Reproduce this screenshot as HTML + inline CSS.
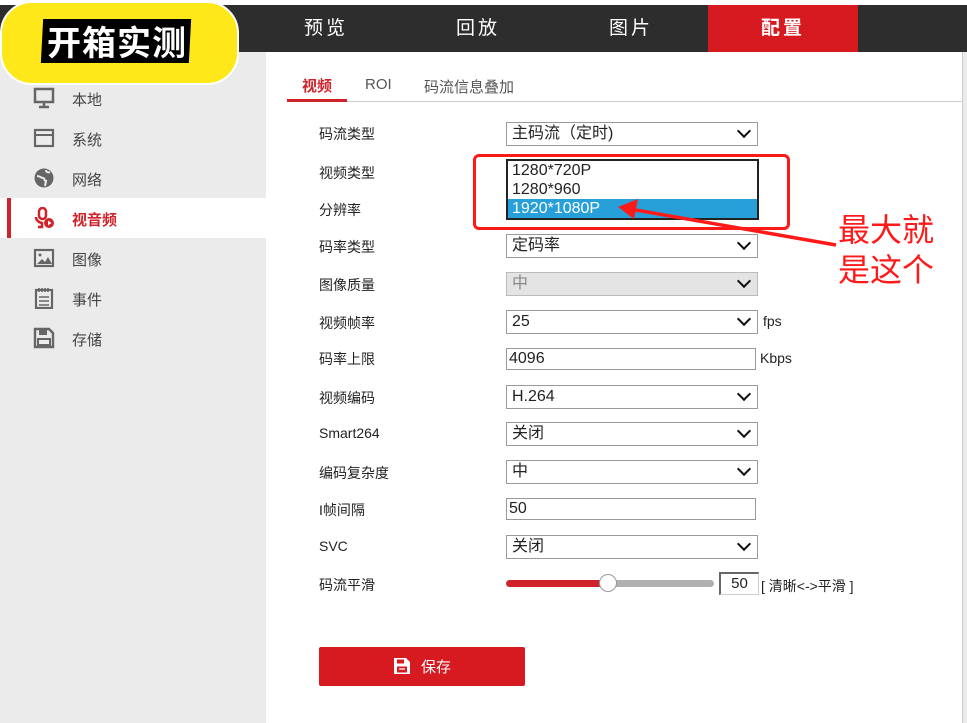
<!DOCTYPE html>
<html><head><meta charset="utf-8">
<style>
*{margin:0;padding:0;box-sizing:border-box}
body{width:967px;height:723px;position:relative;overflow:hidden;background:#fff;font-family:"Liberation Sans","Noto Sans CJK SC",sans-serif;color:#222}
.a{position:absolute}
.top{left:0;top:5px;width:967px;height:47px;background:#2d2d2d}
.nav{top:5px;height:47px;line-height:47px;color:#fff;font-size:19px;text-align:center;width:150px;letter-spacing:3px}
.side{left:0;top:52px;width:266px;height:671px;background:#ebebeb}
.si{left:72px;font-size:15px;color:#444}
.ic{left:33px;width:22px;height:22px}
.lbl{left:319px;font-size:14px;color:#222}
.sel{left:506px;width:252px;height:24px;border:1px solid #999;background:#fff;font-size:16px;line-height:22px;padding-left:5px}
.sel:after{content:"";position:absolute;right:8px;top:3px;width:8px;height:8px;border-right:2.5px solid #111;border-bottom:2.5px solid #111;transform:rotate(45deg)}
.inp{left:506px;width:250px;height:22px;border:1px solid #999;background:#fff;font-size:16px;line-height:20px;padding-left:2px}
</style></head><body>
<div class="a top"></div>
<div class="a nav" style="left:251px">预览</div>
<div class="a nav" style="left:403px">回放</div>
<div class="a nav" style="left:556px">图片</div>
<div class="a nav" style="left:708px;background:#d71920;font-weight:bold">配置</div>
<div class="a side"></div>
<div class="a" style="left:962px;top:52px;width:5px;height:671px;background:#ebebeb;border-left:1px solid #ccc"></div>

<div class="a" style="left:0;top:1px;width:239px;height:84px;background:#ffe81a;border:2px solid #fff;border-radius:32px"></div>
<div class="a" style="left:42px;top:19px;width:148px;height:44px;background:#000;transform:skew(-3deg)"></div>
<div class="a" style="left:47px;top:20px;font-size:34px;font-weight:bold;color:#fff;letter-spacing:1px;font-family:'Noto Sans CJK SC',sans-serif;line-height:42px">开箱实测</div>

<div class="a" style="left:0;top:198px;width:266px;height:40px;background:#fff"></div>
<div class="a" style="left:7px;top:198px;width:4px;height:40px;background:#d0222b"></div>
<svg class="a ic" style="top:87px" viewBox="0 0 22 22"><rect x="2" y="2" width="18" height="13" fill="none" stroke="#666" stroke-width="2.5"/><path d="M11 15v4M6 20h10" stroke="#666" stroke-width="2.5"/></svg>
<svg class="a ic" style="top:127px" viewBox="0 0 22 22"><rect x="2" y="3" width="18" height="16" fill="none" stroke="#666" stroke-width="2.2"/><path d="M2 8h18" stroke="#666" stroke-width="2"/></svg>
<svg class="a ic" style="top:167px" viewBox="0 0 22 22"><circle cx="11" cy="11" r="9.5" fill="#666"/><path d="M4 9c3 0 4 2 6 2s1 3 3 3l-1 5M13 3c0 2 2 3 4 2" stroke="#ebebeb" stroke-width="2" fill="none"/></svg>
<svg class="a ic" style="top:207px" viewBox="0 0 22 22"><rect x="6" y="1" width="7" height="11" rx="3.5" fill="none" stroke="#d0222b" stroke-width="2.5"/><path d="M3 10c0 5 6 6 6 6v4h-4" stroke="#d0222b" stroke-width="2.5" fill="none"/><circle cx="16" cy="16" r="5" fill="#d0222b"/><path d="M15 13.5v5l3.5-2.5z" fill="#fff"/></svg>
<svg class="a ic" style="top:247px" viewBox="0 0 22 22"><rect x="2" y="3" width="18" height="16" fill="none" stroke="#666" stroke-width="2.2"/><circle cx="7" cy="8" r="1.5" fill="#666"/><path d="M4 17l5-5 3 3 3-5 4 7z" fill="#666"/></svg>
<svg class="a ic" style="top:287px" viewBox="0 0 22 22"><rect x="3" y="3" width="16" height="18" fill="none" stroke="#666" stroke-width="2.2"/><path d="M6 1v4M9 1v4M12 1v4M15 1v4M6 10h10M6 14h10M6 18h10" stroke="#666" stroke-width="1.6"/></svg>
<svg class="a ic" style="top:327px" viewBox="0 0 22 22"><path d="M2 2h14l4 4v14H2z" fill="none" stroke="#666" stroke-width="2.4"/><rect x="6" y="3" width="8" height="5" fill="#666"/><rect x="5" y="12" width="12" height="6" fill="none" stroke="#666" stroke-width="2"/></svg>
<div class="a si" style="top:89px">本地</div>
<div class="a si" style="top:129px">系统</div>
<div class="a si" style="top:169px">网络</div>
<div class="a si" style="top:209px;color:#d0222b;font-weight:bold">视音频</div>
<div class="a si" style="top:249px">图像</div>
<div class="a si" style="top:289px">事件</div>
<div class="a si" style="top:329px">存储</div>

<div class="a" style="left:302px;top:75px;font-size:15px;color:#d0222b;font-weight:bold">视频</div>
<div class="a" style="left:365px;top:76px;font-size:15px;color:#555">ROI</div>
<div class="a" style="left:424px;top:76px;font-size:15px;color:#555">码流信息叠加</div>
<div class="a" style="left:287px;top:101px;width:675px;height:1px;background:#ccc"></div>
<div class="a" style="left:287px;top:99px;width:60px;height:3px;background:#d0222b"></div>

<div class="a lbl" style="top:124px">码流类型</div>
<div class="a sel" style="top:122px">主码流（定时)</div>
<div class="a lbl" style="top:163px">视频类型</div>
<div class="a lbl" style="top:200px">分辨率</div>
<div class="a lbl" style="top:237px">码率类型</div>
<div class="a sel" style="top:234px">定码率</div>
<div class="a lbl" style="top:275px">图像质量</div>
<div class="a sel" style="top:272px;background:#e4e4e4;color:#888;border-color:#bbb">中</div>
<div class="a lbl" style="top:313px">视频帧率</div>
<div class="a sel" style="top:310px">25</div>
<div class="a" style="left:763px;top:313px;font-size:14px">fps</div>
<div class="a lbl" style="top:349px">码率上限</div>
<div class="a inp" style="top:348px">4096</div>
<div class="a" style="left:760px;top:350px;font-size:14px">Kbps</div>
<div class="a lbl" style="top:388px">视频编码</div>
<div class="a sel" style="top:385px">H.264</div>
<div class="a lbl" style="top:425px">Smart264</div>
<div class="a sel" style="top:422px">关闭</div>
<div class="a lbl" style="top:463px">编码复杂度</div>
<div class="a sel" style="top:460px">中</div>
<div class="a lbl" style="top:500px">I帧间隔</div>
<div class="a inp" style="top:498px">50</div>
<div class="a lbl" style="top:538px">SVC</div>
<div class="a sel" style="top:535px">关闭</div>
<div class="a lbl" style="top:575px">码流平滑</div>
<div class="a" style="left:506px;top:580px;width:106px;height:7px;background:#d0222b;border-radius:4px"></div>
<div class="a" style="left:606px;top:580px;width:108px;height:7px;background:#b0b0b0;border-radius:4px"></div>
<div class="a" style="left:599px;top:574px;width:18px;height:18px;border-radius:50%;background:#fff;border:1px solid #999"></div>
<div class="a" style="left:719px;top:572px;width:40px;height:23px;border:1px solid #ccc;border-top:2px solid #666;border-left:2px solid #666;font-size:15px;text-align:center;line-height:20px">50</div>
<div class="a" style="left:761px;top:576px;font-size:14px">[ 清晰&lt;-&gt;平滑 ]</div>

<div class="a" style="left:319px;top:647px;width:206px;height:39px;background:#d71920;border-radius:2px"></div>
<svg class="a" style="left:393px;top:657px" width="18" height="18" viewBox="0 0 18 18"><path d="M1 1h12l4 4v12H1z" fill="#fff"/><rect x="4" y="2.5" width="7" height="4" fill="#d71920"/><rect x="4" y="9.5" width="10" height="6" fill="#d71920"/><path d="M6 12h6" stroke="#fff" stroke-width="1.3"/></svg>
<div class="a" style="left:421px;top:656px;color:#fff;font-size:15px">保存</div>

<div class="a" style="left:506px;top:159px;width:253px;height:61px;border:2px solid #222;background:#fff;font-size:16px;line-height:19px">
<div style="padding-left:4px">1280*720P</div>
<div style="padding-left:4px">1280*960</div>
<div style="padding-left:4px;background:#279fd9;color:#fff">1920*1080P</div>
</div>
<div class="a" style="left:473px;top:154px;width:317px;height:76px;border:3px solid #ff1a1a;border-radius:6px"></div>
<svg class="a" style="left:600px;top:195px" width="250" height="60"><path d="M236 50L30 14" stroke="#ff1a1a" stroke-width="3.5"/><path d="M18 12l20-8-4 20z" fill="#ff1a1a"/></svg>
<div class="a" style="left:838px;top:208px;font-size:32px;color:#ff1a1a;line-height:40px;font-family:'Noto Sans CJK SC',sans-serif">最大就<br>是这个</div>
</body></html>
